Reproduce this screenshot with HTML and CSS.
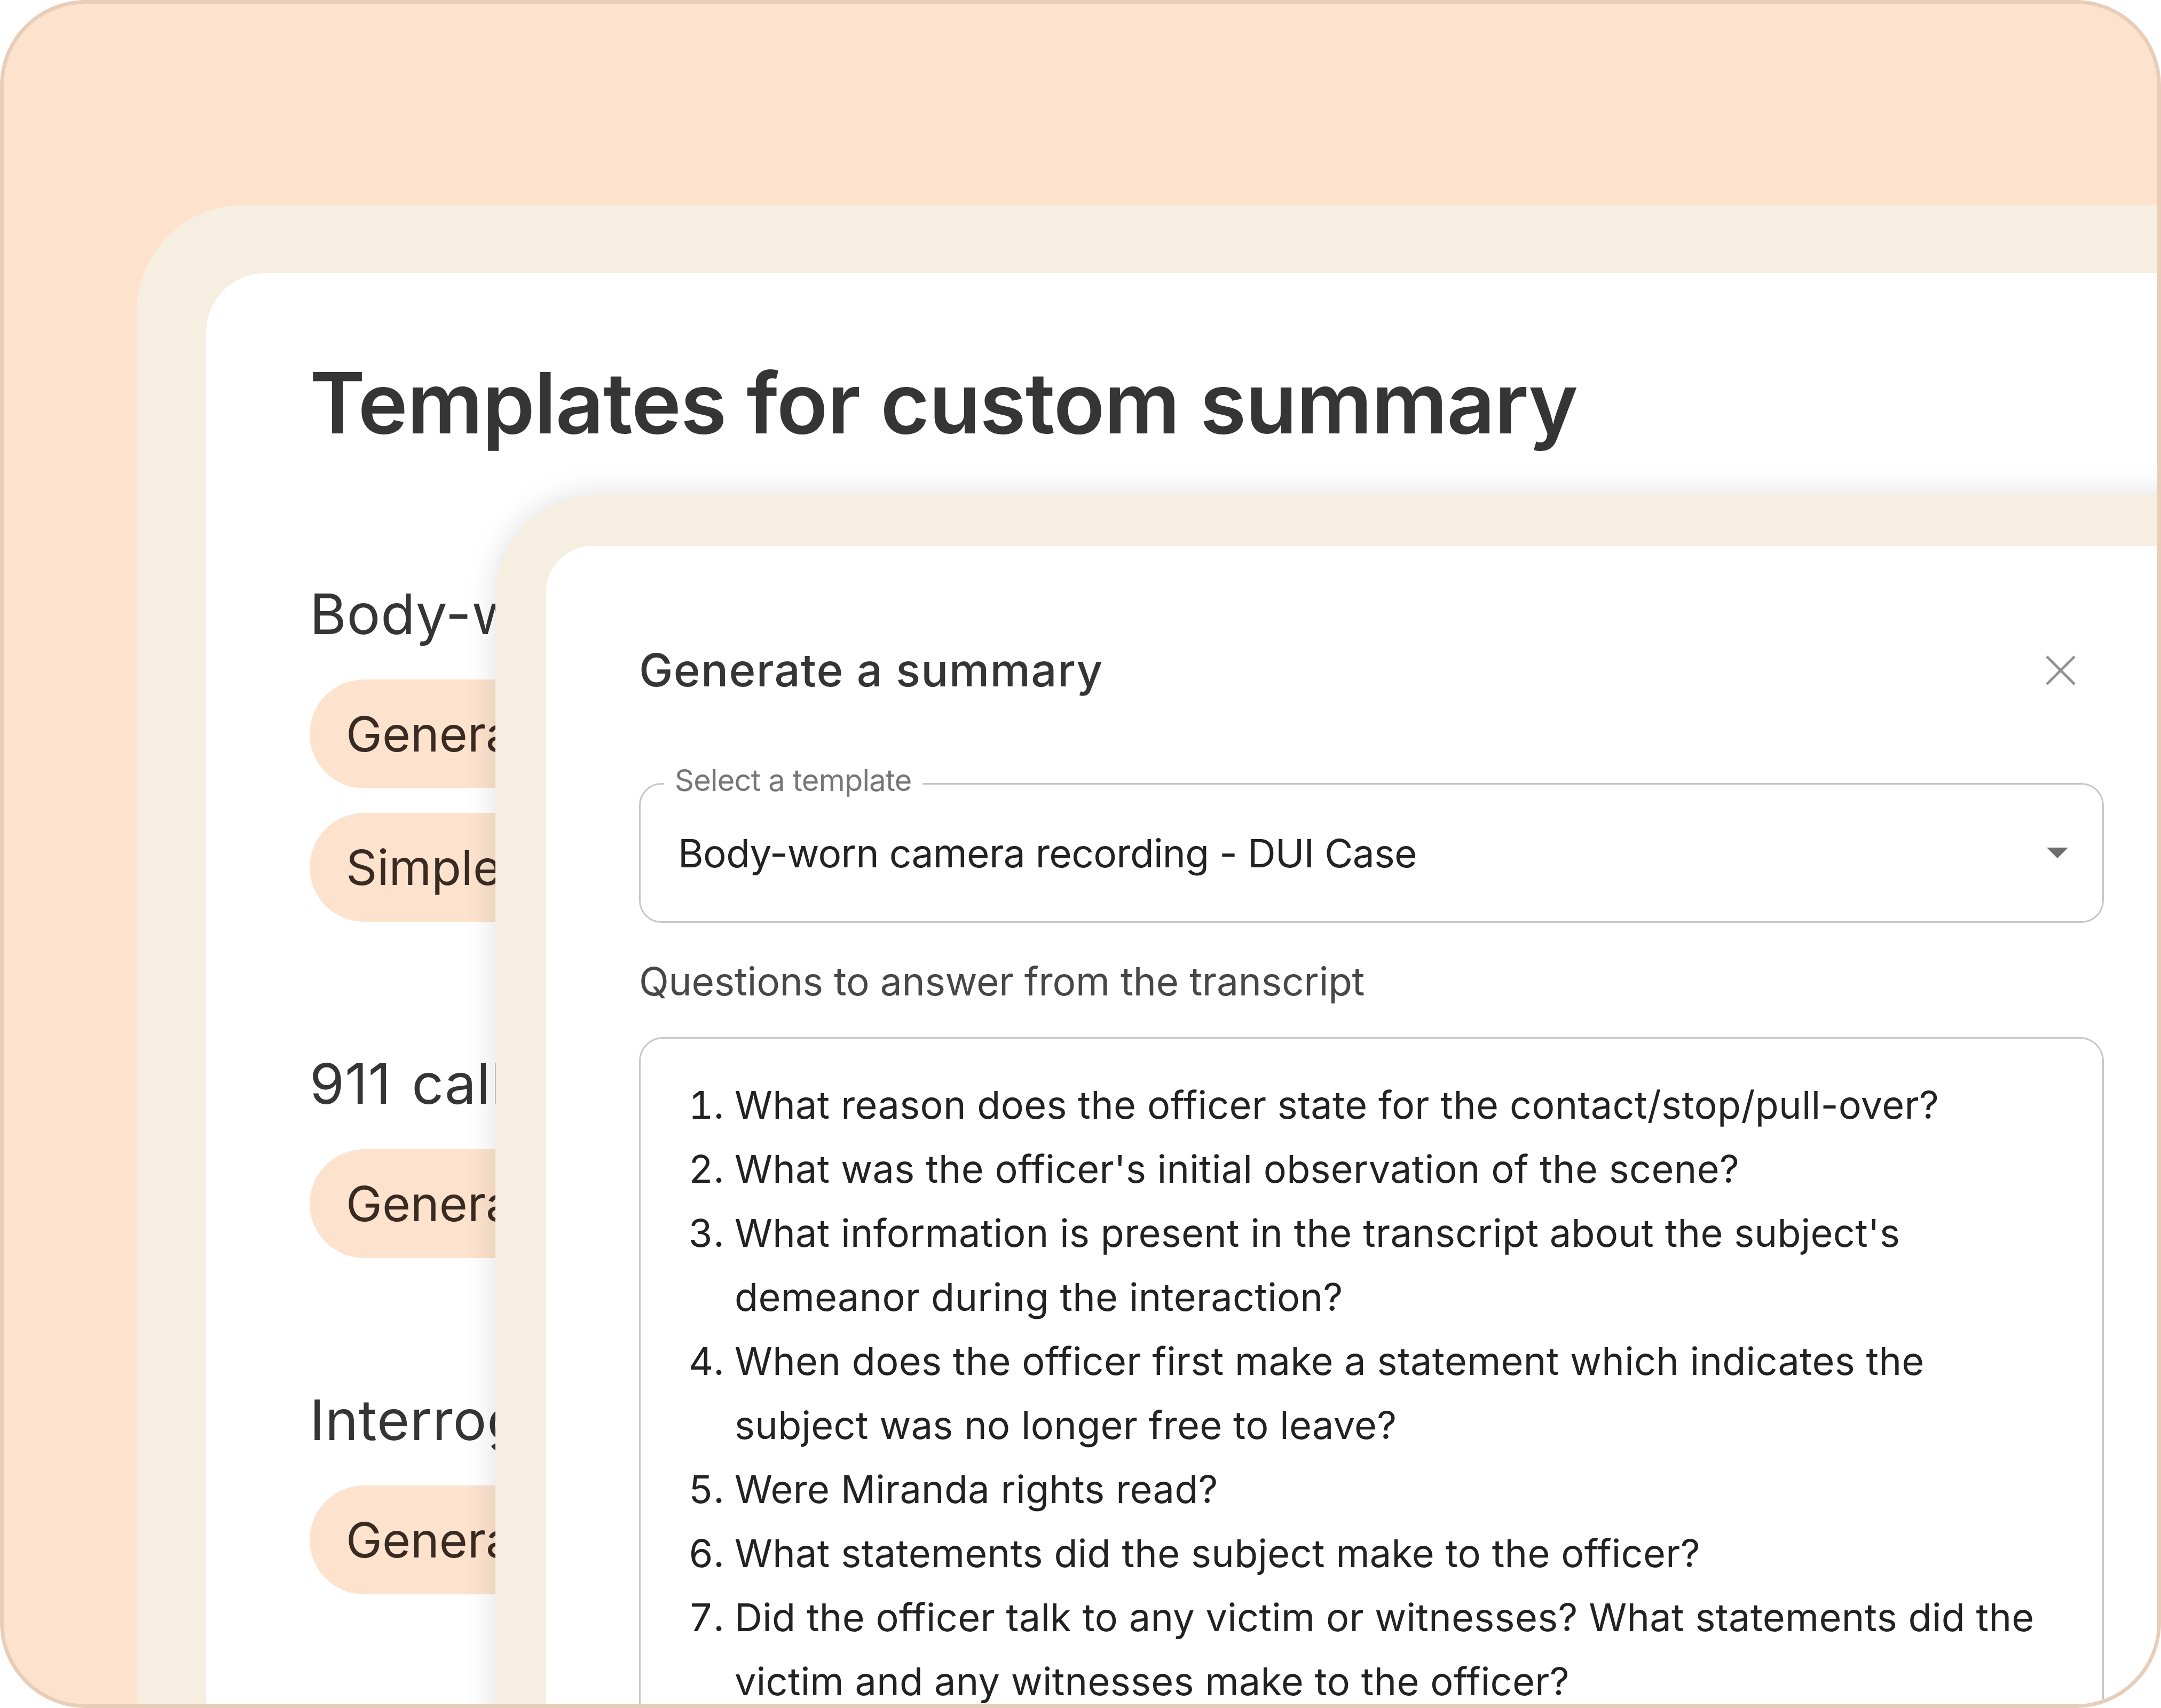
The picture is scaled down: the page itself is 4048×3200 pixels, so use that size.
FILE: index.html
```html
<!DOCTYPE html>
<html lang="en">
<head>
  <meta charset="UTF-8">
  <meta name="viewport" content="width=device-width, initial-scale=1.0">
  <title>Templates for custom summary</title>
  <link rel="stylesheet" href="styles.css">
</head>
<body>
  <div class="frame">
    <div class="board">
      <div class="sheet">
        <h1 class="page-title">Templates for custom summary</h1>

        <section class="group">
          <h2>Body-worn camera recording</h2>
          <div class="pill">General summary</div>
          <div class="pill">Simple summary</div>
        </section>

        <section class="group">
          <h2>911 call</h2>
          <div class="pill">General summary</div>
        </section>

        <section class="group">
          <h2>Interrogation</h2>
          <div class="pill">General summary</div>
        </section>
      </div>
    </div>

    <div class="modal">
      <div class="modal-body">
        <div class="modal-head">
          <h3>Generate a summary</h3>
          <svg class="close" width="60" height="58" viewBox="0 0 60 58">
            <path d="M4 3 L56 55 M56 3 L4 55" stroke="#929292" stroke-width="5" fill="none"/>
          </svg>
        </div>

        <div class="select">
          <span class="select-label">Select a template</span>
          <span class="select-value">Body-worn camera recording - DUI Case</span>
          <svg class="caret" width="40" height="20" viewBox="0 0 40 20">
            <path d="M0 0 L40 0 L20 20 Z" fill="#6e6e6e"/>
          </svg>
        </div>

        <p class="field-title">Questions to answer from the transcript</p>

        <div class="questions">
          <ol>
            <li>What reason does the officer state for the contact/stop/pull-over?</li>
            <li>What was the officer's initial observation of the scene?</li>
            <li>What information is present in the transcript about the subject's demeanor during the interaction?</li>
            <li>When does the officer first make a statement which indicates the subject was no longer free to leave?</li>
            <li>Were Miranda rights read?</li>
            <li>What statements did the subject make to the officer?</li>
            <li>Did the officer talk to any victim or witnesses? What statements did the victim and any witnesses make to the officer?</li>
          </ol>
        </div>
      </div>
    </div>
  </div>
</body>
</html>
```

FILE: styles.css
```css
html, body {
  margin: 0;
  width: 4048px;
  height: 3200px;
  overflow: hidden;
  background: #fff;
  font-family: Inter, "Noto Sans", sans-serif;
}

.frame {
  position: relative;
  width: 4048px;
  height: 3200px;
  box-sizing: border-box;
  border: 7px solid #e8cdb8;
  border-radius: 160px;
  background: #fde3cd;
  overflow: hidden;
}

/* back card */
.board {
  box-sizing: border-box;
  width: 4200px;
  height: 3300px;
  margin: 377px 0 0 249px;
  padding: 128px 0 0 130px;
  background: #f5eee1;
  border-radius: 200px 0 0 0;
}

.sheet {
  height: 100%;
  box-sizing: border-box;
  padding: 164px 0 0 194px;
  background: #fff;
  border-radius: 110px 0 0 0;
}

.page-title {
  margin: 0;
  font-size: 158px;
  line-height: 1;
  font-weight: 600;
  letter-spacing: -1.4px;
  color: #353535;
}

.group {
  margin-top: 250px;
}

.page-title + .group {
  margin-top: 263px;
}

.group h2 {
  margin: 0 0 71px;
  font-size: 105px;
  line-height: 1;
  font-weight: 400;
  letter-spacing: 0.8px;
  word-spacing: 8px;
  color: #353535;
}

.pill {
  display: flex;
  align-items: center;
  width: fit-content;
  height: 204px;
  box-sizing: border-box;
  padding: 0 90px 0 68px;
  margin-bottom: 46px;
  border-radius: 102px;
  background: #fde3cd;
  color: #3a2b22;
  font-size: 91px;
  line-height: 1;
  white-space: nowrap;
}

/* dialog on top */
.modal {
  position: absolute;
  left: 921px;
  top: 920px;
  width: 3400px;
  height: 2500px;
  box-sizing: border-box;
  padding: 96px 0 0 95px;
  background: #f5eee1;
  border-radius: 190px 0 0 0;
  box-shadow: 0 0 60px rgba(0, 0, 0, 0.13);
}

.modal-body {
  height: 100%;
  box-sizing: border-box;
  padding: 190px 0 0 174px;
  background: #fff;
  border-radius: 85px 0 0 0;
}

.modal-head,
.select,
.field-title,
.questions {
  width: 2744px;
  box-sizing: border-box;
}

.modal-head {
  display: flex;
  justify-content: space-between;
  align-items: center;
  padding-right: 51px;
}

.modal-head h3 {
  margin: 0;
  font-size: 85px;
  line-height: 1;
  font-weight: 500;
  letter-spacing: 1.3px;
  color: #353535;
}

.select {
  position: relative;
  display: flex;
  justify-content: space-between;
  align-items: center;
  height: 262px;
  margin-top: 169px;
  padding: 0 64px 0 70px;
  border: 3px solid #c7c7c7;
  border-radius: 42px;
}

.select-label {
  position: absolute;
  left: 44px;
  top: -36px;
  padding: 0 20px;
  background: #fff;
  font-size: 56px;
  line-height: 1;
  letter-spacing: -0.8px;
  color: #767676;
}

.select-value {
  font-size: 73px;
  line-height: 1;
  letter-spacing: -0.7px;
  color: #222;
}

.field-title {
  margin: 73px 0 0;
  font-size: 73px;
  line-height: 1;
  letter-spacing: -0.25px;
  color: #474747;
}

.questions {
  height: 1400px;
  margin-top: 68px;
  padding: 64px 100px 0 96px;
  border: 3px solid #c7c7c7;
  border-radius: 45px;
}

.questions ol {
  margin: 0;
  padding-left: 80px;
  font-size: 72px;
  line-height: 120px;
  letter-spacing: 0.3px;
  color: #222;
}
```
